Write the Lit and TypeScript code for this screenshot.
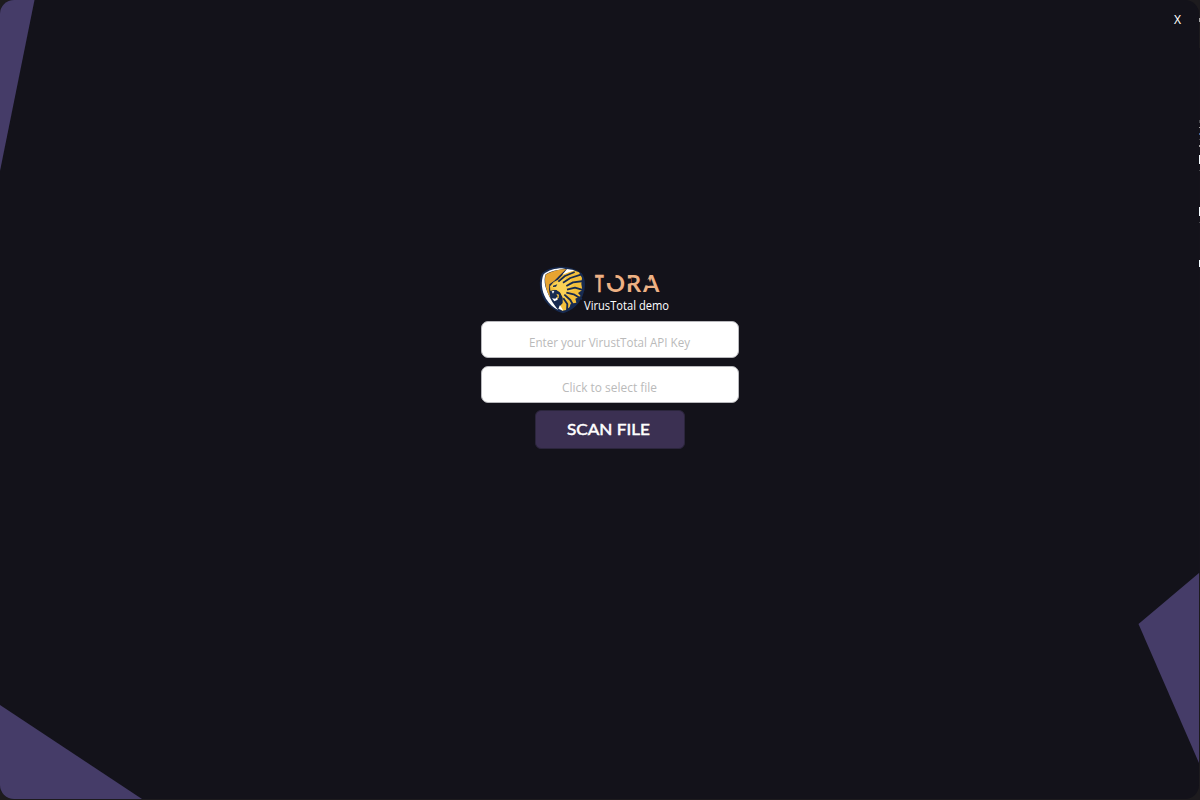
import { LitElement, html, css } from "lit";
import { customElement } from "lit/decorators.js";

const fitted = (text: string, width: number, height: number, baseline: number, cls: string) => html`
  <svg class="label ${cls}" width=${width} height=${height} viewBox="0 0 ${width} ${height}">
    <text x="0" y=${baseline} textLength=${width} lengthAdjust="spacingAndGlyphs">${text}</text>
  </svg>`;

@customElement("tora-logo")
export class ToraLogo extends LitElement {
  static styles = css`
    :host { display: flex; width: 129px; height: 49px; }
    .shield { flex: none; width: 45px; height: 48px; }
    .words { display: flex; flex-direction: column; margin-left: -1px; width: 85px; }
    svg { display: block; overflow: visible; }
    .name { margin: 9px 0 0 11px; fill: #eeb184; font: 700 23.500px Lato, sans-serif; }
    .gap { fill: #13121a; }
    .sub { margin-top: 5px; fill: #fff; font: 12.500px "Open Sans", sans-serif; }
  `;
  render() {
    return html`
      <svg class="shield" viewBox="12 6 135 144">
        <path d="M78 8C55 8 33 14 18 28C7 49 10 84 26 109C41 131 64 144 81 148C111 139 134 116 143 86C150 60 147 42 137 28C120 15 98 9 78 8Z" fill="#172a50"/>
        <path d="M78 13C57 13 37 19 23 31C14 50 16 81 30 104C40 120 54 132 67 138C50 119 36 94 28 67C25 53 25 40 29 31C44 22 62 17 88 15Z" fill="#fff"/>
        <path d="M91 15C69 16 45 22 29 32C24 50 29 76 43 102L39 77L40 61L55 50L69 36Z" fill="#e7a431"/>
        <path d="M42 67L53 54L66 47L84 28L108 17L129 25L138 42L136 60L139 78L126 87L134 96L118 104L121 116L104 119L101 129L90 138L78 140L69 130L80 117L80 101L73 86L61 78L43 80Z" fill="#f3bf3b"/>
        <path d="M45 67L57 56L72 52L91 36L86 55L108 43L94 64L114 61L94 75L115 79L91 84L105 96L86 90L94 110L79 96L71 82L58 76Z" fill="#fad155"/>
        <path d="M67 53L87 36L116 24M81 56L103 42L137 31M91 66L111 55L143 51M93 77L117 71L145 79M91 86L113 91L138 106M85 92L103 108L113 126M82 103L94 120L93 139" fill="none" stroke="#172a50" stroke-width="5.500" stroke-linejoin="round"/>
        <path d="M51 65L64 61L60 68L51 69ZM43 82L59 78L71 86L76 99L71 112L62 119L47 104L58 103L61 96L56 89Z" fill="#172a50"/>
        <path d="M93 15L116 19L98 25L79 32ZM47 82L55 81L51 89ZM48 103L58 104L64 98L65 107L55 112ZM72 123L82 140L67 134Z" fill="#fff"/>
        <path d="M61 89L69 92L68 102L62 105L65 97Z" fill="#f3bf3b"/>
      </svg>
      <div class="words">
        <svg class="name" width="65" height="18" viewBox="0 0 65 18">
          <text transform="scale(.62 1)" x="0" y="17" stroke="#eeb184" stroke-width=".6">T</text>
          <text x="11" y="17">O</text>
          <text x="31" y="17">R</text>
          <text x="48" y="17">A</text>
          <path class="gap" d="M10.500 -1H20.500V5L17 8H10.500ZM31 3.500H36V8L31 9.500ZM49 7L54 4L55.500 9L54 11L50 10Z"/>
        </svg>
        <svg class="sub" width="85" height="16" viewBox="0 0 85 16">
          <text x="0" y="12" textLength="85" lengthAdjust="spacingAndGlyphs">VirusTotal demo</text>
        </svg>
      </div>`;
  }
}

@customElement("app-root")
export class AppRoot extends LitElement {
  static styles = css`
    :host { display: flex; width: 1200px; height: 800px; background: #1d1b1e; overflow: hidden; }
    .window { position: relative; display: flex; flex: none; flex-direction: column; width: 1199px; height: 799px; background: #13121a; border-radius: 14px; overflow: hidden; }
    .edge { display: block; flex: none; }
    .shapes { position: absolute; inset: 0; fill: #453c68; }
    header { display: flex; justify-content: flex-end; padding: 12px 17px 0 0; height: 254px; }
    .close { width: 9px; height: 16px; padding: 0; border: 0; background: none; color: #fff; font: 12px/16px "Noto Sans", sans-serif; }
    main { display: flex; flex-direction: column; align-items: center; width: 258px; margin-left: 481px; z-index: 1; }
    tora-logo { margin-right: 12px; }
    .field { box-sizing: border-box; display: flex; justify-content: center; width: 258px; height: 37px; margin-top: 6px; padding: 11px 1px 0 0; border: 1px solid #b8b8bc; border-radius: 7px; background: #fff; }
    .field + .field { margin-top: 8px; }
    .label { display: block; overflow: visible; }
    .hint { fill: #bababa; font: 13.500px "Open Sans", sans-serif; }
    .scan { display: flex; justify-content: center; box-sizing: border-box; width: 150px; height: 39px; margin: 7px 0 0; padding: 10px 3px 0 0; border: 1px solid #2b253c; border-radius: 6px; background: #3b3052; }
    .action { fill: #fff; stroke: #fff; stroke-width: .5px; font: 400 16px Lato, sans-serif; }
  `;
  render() {
    return html`
      <div class="window">
        <svg class="shapes" width="1199" height="799" viewBox="0 0 1199 799">
          <path d="M0 0H34.5L0 171Z"/><path d="M0 705L142 799H0Z"/><path d="M1199 573L1138.500 624L1199 763Z"/>
        </svg>
        <header><button class="close">X</button></header>
        <main>
          <tora-logo></tora-logo>
          <div class="field">${fitted("Enter your VirustTotal API Key", 161, 18, 14, "hint")}</div>
          <div class="field">${fitted("Click to select file", 95, 18, 14, "hint")}</div>
          <button class="scan">${fitted("SCAN FILE", 83, 18, 14, "action")}</button>
        </main>
      </div>
      <svg class="edge" width="1" height="800" viewBox="0 0 1 800" shape-rendering="crispEdges">
        <path d="M0 48H1V573H0Z" fill="#15131b"/>
        <path d="M0 18H1V22H0ZM0 127H1V128H0ZM0 145H1V147H0Z" fill="#a5a5a5"/>
        <path d="M0 120H1V123H0ZM0 139H1V140H0ZM0 170H1V171H0ZM0 222H1V223H0Z" fill="#4a4a50"/>
        <path d="M0 133H1V135H0Z" fill="#43659b"/>
        <path d="M0 155H1V164H0ZM0 207H1V216H0ZM0 260H1V267H0Z" fill="#f4fbff"/>
      </svg>`;
  }
}
